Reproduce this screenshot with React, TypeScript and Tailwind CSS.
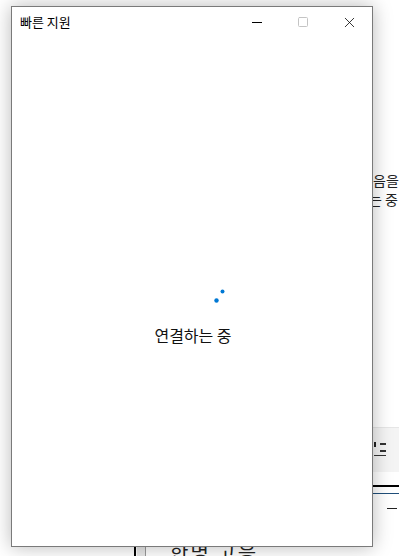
import { Square, X } from "lucide-react";

const font = { fontFamily: '"Noto Sans CJK KR", "Noto Sans", sans-serif' };

function Spinner() {
  return (
    <svg width="14" height="16" viewBox="0 0 14 16" className="block">
      <circle cx="9.5" cy="3.5" r="2" fill="#0078d4" />
      <circle cx="3.5" cy="12.5" r="2.2" fill="#0078d4" />
    </svg>
  );
}

function BackgroundApp() {
  return (
    <div className="absolute inset-0 bg-white" style={font}>
      {/* 뒤쪽 창의 오른쪽 일부 */}
      <div className="absolute left-[373px] top-[171px] text-[14px] leading-[18px] text-[#222]">
        <div>음을</div>
        <div className="-ml-[4px] mt-[1px]">는 중</div>
      </div>
      <div className="absolute left-[373px] right-0 top-[427px] h-[45px] bg-[#f4f4f4] border-t border-[#e6e6e6]">
        <div className="flex items-center gap-[14px] pl-[1px] pt-[14px]">
          <div className="flex flex-col gap-[3px]">
            <div className="flex gap-[1px]">
              <div className="w-[2px] h-[5px] bg-[#222]" />
              <div className="w-[6px] h-[1.5px] bg-[#333] mt-[1px] ml-[3px]" />
            </div>
            <div className="w-[6px] h-[1.5px] bg-[#333] ml-[6px]" />
            <div className="w-[12px] h-[1.5px] bg-[#333]" />
          </div>
          <div className="flex flex-col gap-[3px] pt-[1px]">
            <div className="w-[4px] h-[1.5px] bg-[#333]" />
            <div className="w-[4px] h-[1.5px] bg-[#333]" />
            <div className="w-[4px] h-[1.5px] bg-[#333]" />
          </div>
        </div>
      </div>
      <div className="absolute left-[373px] right-0 top-[485px] h-[2px] bg-black" />
      <div className="absolute left-[373px] right-0 top-[493px] h-px bg-[#1f4e79]" />
      <div className="absolute left-[387px] top-[508px] w-[10px] h-px bg-[#222]" />

      {/* 아래쪽 일부 */}
      <div className="absolute left-[134px] top-[546px] w-[2px] h-[10px] bg-black" />
      <div className="absolute left-[137px] top-[546px] w-[9px] h-[10px] bg-[#e8e8e8] border-r border-[#999]" />
      <div className="absolute left-[170px] top-[540px] text-[20px] leading-[24px] text-[#222] tracking-[2px]">
        한명 고응
      </div>
    </div>
  );
}

export default function App() {
  return (
    <div className="relative w-[399px] h-[556px] overflow-hidden bg-white">
      <BackgroundApp />
      <div
        className="absolute left-[11px] top-[6px] w-[362px] h-[541px] bg-white border border-[#7a7a7a] flex flex-col shadow-[0_0_18px_rgba(0,0,0,0.28)]"
        style={font}
      >
        <div className="h-[30px] flex items-center shrink-0">
          <span className="pl-[8px] text-[13px] text-black">빠른 지원</span>
          <div className="ml-auto flex h-full">
            <div className="w-[46px] flex items-center justify-center">
              <div className="w-[10px] h-px bg-black" />
            </div>
            <div className="w-[46px] flex items-center justify-center">
              <Square size={12} strokeWidth={1} className="text-[#c4c4c4]" absoluteStrokeWidth />
            </div>
            <div className="w-[46px] flex items-center justify-center">
              <X size={17} strokeWidth={1.1} className="text-black" />
            </div>
          </div>
        </div>
        <div className="flex-1 flex flex-col items-center">
          <div className="mt-[251px] ml-[56px]">
            <Spinner />
          </div>
          <div className="mt-[19px] ml-[2px] text-[16px] text-[#111]">연결하는 중</div>
        </div>
      </div>
    </div>
  );
}
